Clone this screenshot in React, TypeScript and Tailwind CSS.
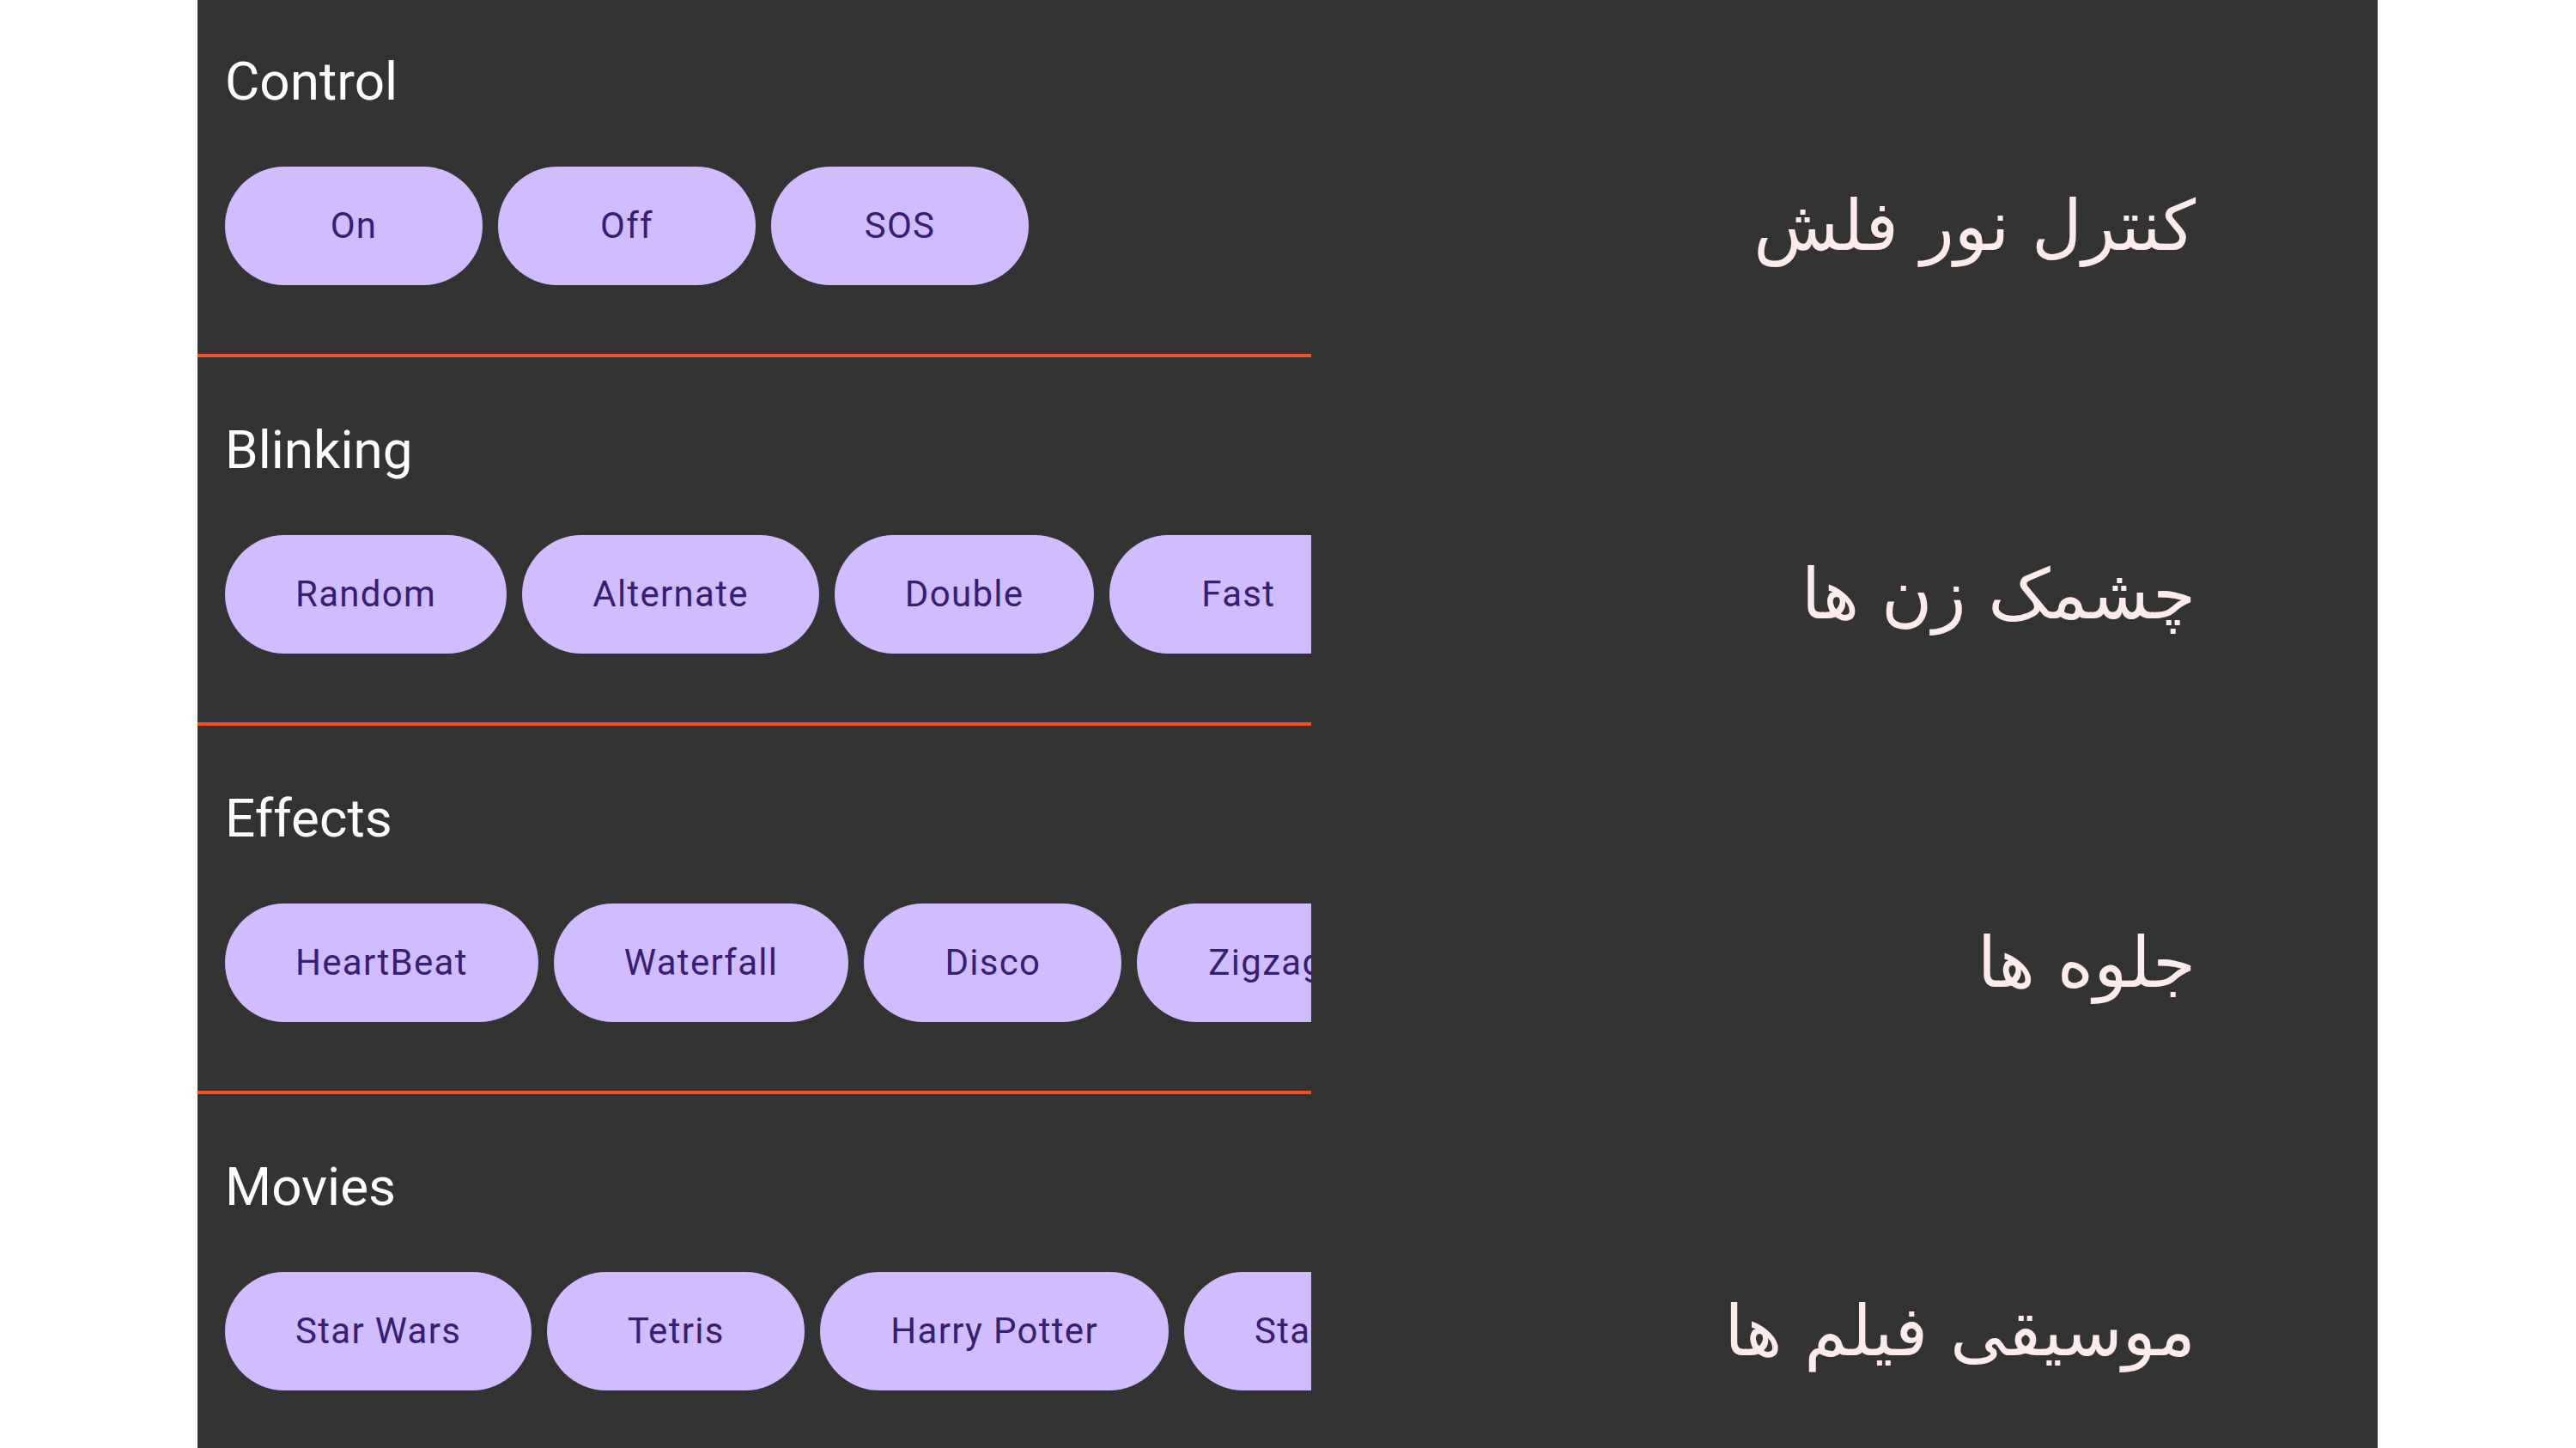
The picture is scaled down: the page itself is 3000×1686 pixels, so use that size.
import React from "react"

type Section = {
    title: string
    label: string
    modes: string[]
}

const sections: Section[] = [
    { title: "Control", label: "کنترل نور فلش", modes: ["On", "Off", "SOS"] },
    { title: "Blinking", label: "چشمک زن ها", modes: ["Random", "Alternate", "Double", "Fast", "Strobe"] },
    { title: "Effects", label: "جلوه ها", modes: ["HeartBeat", "Waterfall", "Disco", "Zigzag", "Candle"] },
    { title: "Movies", label: "موسیقی فیلم ها", modes: ["Star Wars", "Tetris", "Harry Potter", "Star Trek", "Titanic"] },
]

function ModeButton(props: { text: string }) {
    return (
        <button
            type="button"
            className="shrink-0 h-[138px] min-w-[300px] px-[82px] rounded-full bg-[#d0bcff] text-[#381e72] text-[42px] tracking-[1.3px] leading-none whitespace-nowrap"
        >
            {props.text}
        </button>
    )
}

function FlashSection(props: { section: Section, first: boolean, last: boolean }) {
    const { section } = props
    return (
        <div className={props.first ? "pt-[64px]" : "pt-[77px]"}>
            <h2 className="pl-[32px] text-[62px] leading-[62px] text-white">{section.title}</h2>

            <div className="flex items-center mt-[68px]">
                {/* horizontal list of modes, cut at the edge of the left column */}
                <div className="w-[1297px] pl-[32px] overflow-hidden">
                    <div className="flex gap-[18px]">
                        {section.modes.map((m) => (
                            <ModeButton key={m} text={m} />
                        ))}
                    </div>
                </div>
                <div
                    dir="rtl"
                    className="flex-1 pr-[212px] text-right text-[81px] leading-none text-[#fdeceb] font-['DejaVu_Sans',sans-serif]"
                >
                    {section.label}
                </div>
            </div>

            {!props.last && <div className="w-[1297px] h-[4px] mt-[80px] bg-[#f4511e]" />}
        </div>
    )
}

export default function App() {
    return (
        <div className="w-full h-[1686px] bg-white flex font-['Roboto',sans-serif]">
            <div className="ml-[230px] w-[2539px] h-full bg-[#333333] overflow-hidden">
                {sections.map((s, i) => (
                    <FlashSection key={s.title} section={s} first={i == 0} last={i == sections.length - 1} />
                ))}
            </div>
        </div>
    )
}
